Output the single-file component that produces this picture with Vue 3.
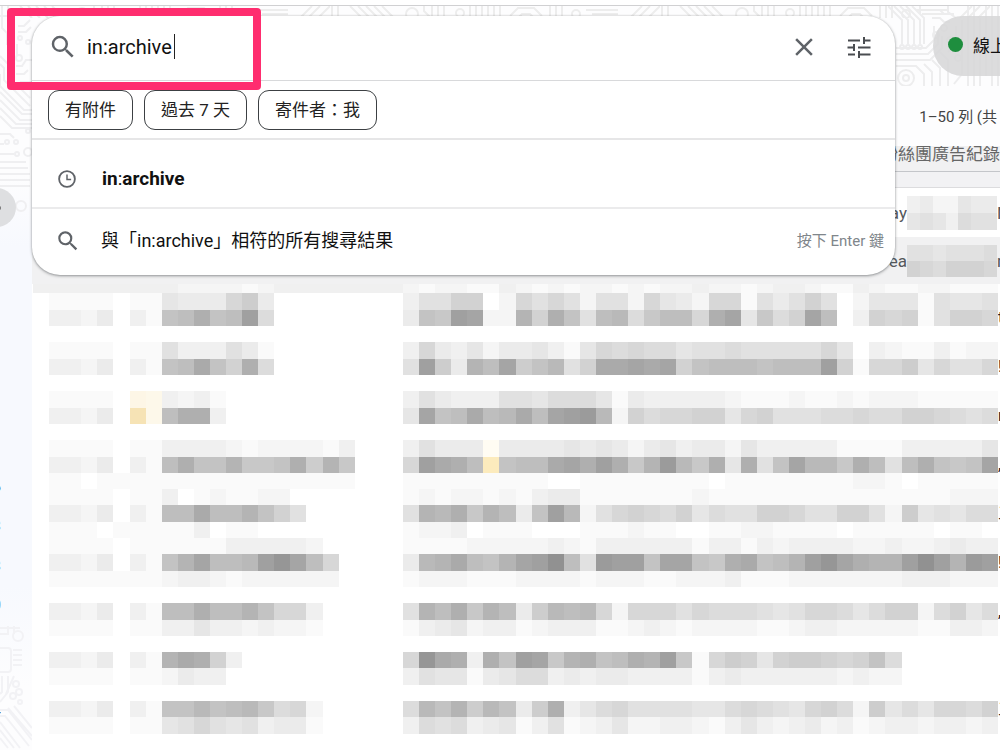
<script setup>
import { ref } from 'vue'

const query = ref('in:archive')
const chips = ['有附件', '過去 7 天', '寄件者：我']
const counts = [
  { top: 477, text: '6' },
  { top: 516, text: '3' },
  { top: 556, text: '3' },
  { top: 595, text: '0' },
  { top: 703, text: '+' },
]
const tails = ['ti', '!', 'm', ',', '三', '!', ',', '', '三']

// Each letter is one gray level: a is white, every next letter is 5 darker.
// Digits are tinted cells.
const tints = { 1: '#fdf6e6', 2: '#f6e3b5', 3: '#fdf8ea', 4: '#fffcf3', 5: '#fcebbd', 6: '#c0bdb6' }
const light = 'abbbbabb'
const dark = 'addceadb'
const rows = [
  ['dddddddd', 'dccccbcddddddddd', 'cbccbbdcbcbccbcbc' + 'cdccbcddcbbdcbbccbbb'],
  [light, 'feeeike', 'dggjjacigigcggcif' + 'eciibgegjgacfffbgffg'],
  [dark, 'mnqmnth', 'emltsccpjqmgnohln' + 'niqsflhjsnadjijbgjji'],
  ['', '', ''],
  [light, 'gdddgeb', 'diedfceefdbfihihh' + 'fgghgggggifadcbbdbcc'],
  [dark, 'mnrmjqh', 'gtkepnskmogjrrsrs' + 'jmnnnmnnntjbiikfiggi'],
  ['', '', ''],
  ['abbbba13', 'dcdb', 'dgedddggfhhhfbedd' + 'dddcbbbcbbcbcccbbbbb'],
  ['addcea23', 'nqqd', 'fsmnrnornstuocjhi' + 'ijjfijggghhihhjjihgh'],
  ['', '', ''],
  [light, 'ddddcbccccbd', 'dgeee4eeeefefecef' + 'deecfdddddbbbbdddddf'],
  [dark, 'nqmmpllmqkpl', 'itrqn5mnnrsqtqlpu' + 'olqfqgmsoolqngnqmlms'],
  ['abbabbbb', 'bbbbbbbbbbbb', 'bbbbbbbbbaabbbbbb' + 'bbabbbbbbbbccbabbbbb'],
  [light, 'dabcbbcc', 'bcbccbcbdeebbbbbb' + 'bcbbbbbbbbbbbbbbbccc'],
  [dark, 'nnrnnpmjg', 'gpoqlpnemtocgijih' + 'jfhggjjiggjjgckfgfhh'],
  ['abbbabbb', 'bbdabb', 'bccdabbbaaabbbcbb' + 'aabbccbbbbabbbbbabba'],
  [light, 'bbbbdddddc', 'bbbbcccccdcbddddd' + 'dbddbdcddddccdccdedd'],
  [dark, 'mpsnnotvsni', 'eoprnmpstwnguttms' + 'smlqrmnptvsqpptwtput'],
  ['abbbbbbb', 'cddcbcccccc', 'bcccbbbccccbcccbb' + 'cccdbbbcccccccdddccc'],
  ['', '', ''],
  [dark, 'nnqnnpmiid', 'gpnqlpnekonoiciii' + 'gihhhgfgiihfhjjchjfh'],
  [light, 'ddfddcdccb', 'bdefcddbcdddbbcdc' + 'bccccbbcddcccccbbddc'],
  ['', '', ''],
  [dark, 'prqjd', 'ivrqdqmtslpqmnqpt' + 'lbikjfjkkjijmhaaaaaa'],
  [light, 'cedd', 'dgffbefhhdedeeddd' + 'dbdeddddddcdccaaaaaa'],
  ['', '', ''],
  [dark, 'mmomnolhic', 'hompkomekqdfhiggg' + 'gffhihgfijhckfhfiihj'],
  [light, 'fgigfgdeeb', 'dhghdefbdgbcdfccd' + 'dcbdfdcdecdbcddcddcd'],
  ['', '', ''],
]

function cellsOf(parts, widths) {
  const line = parts.map((p, i) => p.slice(0, widths[i]).padEnd(widths[i], 'a')).join('')
  return [...line]
    .map((ch, x) => ({
      x,
      fill: tints[ch] || `rgb(${Array(3).fill(255 - (ch.charCodeAt(0) - 97) * 5)})`,
      ch,
    }))
    .filter((c) => c.ch !== 'a')
}
const mosaic = rows.map((r) => cellsOf(r, [8, 15, 37]))
const smallTop = ['deccfee', 'fgfdhgg'].map((r) => cellsOf([r], [7]))
const smallBottom = ['ggfgggh', 'jihjjji'].map((r) => cellsOf([r], [7]))
</script>

<template>
  <div class="app">
    <div class="topline"></div>
    <svg class="traces traces-top" aria-hidden="true">
      <defs>
        <pattern id="strip" width="330" height="12" patternUnits="userSpaceOnUse">
          <g fill="none" stroke="#ededed" stroke-width="2">
            <path d="M2 0v12M8 0v12M20 0l12 12M28 0l12 12M36 0l12 12M44 0l12 12M52 0l12 12" />
            <circle cx="82" cy="8" r="6" /><path d="M94 0v5l6 6M102 0v12M108 0v12M114 0v12" />
            <circle cx="130" cy="7" r="4" /><path d="M140 0v12M146 0v12M152 0v12M158 0v12M164 0v12M170 0v12" />
            <path d="M180 10l8-8h16l8 8M188 12l4-4h8l4 4M220 0v12M226 0v12M232 0v12" />
            <circle cx="246" cy="8" r="4" /><path d="M256 4h32M262 8h26M300 12l12-12M308 12l12-12M318 12l12-12" />
          </g>
        </pattern>
      </defs>
      <rect width="100%" height="12" fill="url(#strip)" />
    </svg>
    <svg class="traces traces-left" width="32" height="220" viewBox="0 0 32 220" aria-hidden="true">
      <g fill="none" stroke="#efeff1" stroke-width="2">
        <path d="M2 2v20l5 5v12M0 10h8M0 50l8 8v12l22 22M0 58l4 4v12l26 26M0 68v12l24 24h8M0 86l22 22h10M0 94l20 20h12M0 102l16 16h16M0 110l12 12h20" />
        <path d="M18 20h6l6-6M18 26h8l5-5M16 60h6l4-6h6M16 68h8l4-4M20 76h12M0 128h10l4 4M0 138h4M0 148h14M0 156h26M0 162h28M0 168h30M0 174h30M0 180h30M17 38v12" />
        <circle cx="20" cy="32" r="2" /><circle cx="28" cy="36" r="2" /><circle cx="19" cy="52" r="3" />
        <circle cx="7" cy="136" r="2" /><circle cx="16" cy="136" r="2" /><circle cx="17" cy="148" r="2" />
        <circle cx="28" cy="146" r="4" /><circle cx="28" cy="125" r="2" /><circle cx="21" cy="200" r="5" />
      </g>
    </svg>
    <svg class="traces traces-bottom" width="32" height="124" viewBox="0 0 32 124" aria-hidden="true">
      <g fill="none" stroke="#f2f2f5" stroke-width="2">
        <path d="M0 2h20M0 8h8v-8M14 8v-8M0 22h8q3 0 3 3v18q0 3-3 3H0M13 24h9M13 29h9M13 34h9M13 39h9M2 50v16l-2 2M8 50v16l-8 10M14 50l-8 18" />
        <path d="M0 84h8l24 30M0 90h5l24 30M0 96l20 26M0 104l14 18M0 112l8 10M8 82l24 28M14 80l18 22" />
        <circle cx="18" cy="10" r="5" /><circle cx="16" cy="58" r="3" /><circle cx="13" cy="70" r="3" /><circle cx="19" cy="66" r="3" /><circle cx="20" cy="76" r="2" />
      </g>
    </svg>

    <header class="bar">
      <svg class="traces traces-right" width="112" height="80" viewBox="0 0 112 80" aria-hidden="true">
        <g fill="none" stroke="#ededee" stroke-width="2">
          <path d="M0 0l14 14v24M6 0l14 14v24M12 0l14 14v24M18 0l14 14v24M24 0l12 12v26M32 0v8M8 42h30l8-8V20M8 48h32l10-10V24M8 54h34l12-12V30M8 60h20l8 8v12M36 58l8 8v14M44 54l8 8v18M52 46l8 8v26" />
          <path d="M44 4h8l4 4h10M44 12h8l4 4h6M60 0v6l8 6M68 20v12M68 38l-8 8M74 14v54l-8 10M80 0v80M86 0v80M92 12v68M98 0v70M104 6v74M110 0v80" />
          <circle cx="18" cy="72" r="8" /><circle cx="18" cy="72" r="3" />
          <circle cx="14" cy="41" r="2" /><circle cx="20" cy="41" r="2" /><circle cx="26" cy="41" r="2" /><circle cx="32" cy="41" r="2" />
          <circle cx="56" cy="22" r="3" /><circle cx="48" cy="29" r="3" /><circle cx="62" cy="34" r="3" /><circle cx="70" cy="52" r="3" />
        </g>
      </svg>
      <button class="status" type="button"><span class="dot"></span><span>線上</span></button>
    </header>

    <div class="body">
      <aside class="side">
        <span class="side-pill"><i></i></span>
        <span v-for="c in counts" :key="c.top" class="count" :style="{ top: c.top + 'px' }">{{ c.text }}</span>
      </aside>
      <main class="main">
        <div class="pager">1–50 列 (共</div>
        <div class="banner"><span>粉絲團廣告紀錄</span></div>
        <div class="gap"></div>
        <div class="mail">
          <span>ay</span>
          <svg width="90" height="34" viewBox="0 0 7 2" preserveAspectRatio="none" shape-rendering="crispEdges" aria-hidden="true">
            <g v-for="(r, y) in smallTop" :key="y">
              <rect v-for="c in r" :key="c.x" :x="c.x" :y="y" width="1" height="1" :fill="c.fill" />
            </g>
          </svg>
          <span class="cut">N</span>
        </div>
        <div class="mail read">
          <span>rea</span>
          <svg width="90" height="32" viewBox="0 0 7 2" preserveAspectRatio="none" shape-rendering="crispEdges" aria-hidden="true">
            <g v-for="(r, y) in smallBottom" :key="y">
              <rect v-for="c in r" :key="c.x" :x="c.x" :y="y" width="1" height="1" :fill="c.fill" />
            </g>
          </svg>
          <span class="cut">n</span>
        </div>
        <div class="list">
          <svg class="mosaic" viewBox="0 0.42 60 28.58" preserveAspectRatio="none" shape-rendering="crispEdges" aria-hidden="true">
            <g v-for="(r, y) in mosaic" :key="y">
              <rect v-for="c in r" :key="c.x" :x="c.x" :y="y" width="1" height="1" :fill="c.fill" />
            </g>
          </svg>
          <div class="tails"><span v-for="(t, i) in tails" :key="i">{{ t }}</span></div>
        </div>
      </main>
    </div>

    <form class="search" role="search" @submit.prevent>
      <div class="field">
        <button type="submit" class="icon find" aria-label="搜尋">
          <svg width="30" height="30" viewBox="0 0 24 24" fill="#5f6368"><path d="M15.5 14h-.79l-.28-.27A6.47 6.47 0 0 0 16 9.5 6.5 6.5 0 1 0 9.5 16c1.61 0 3.09-.59 4.23-1.57l.27.28v.79l5 4.99L20.49 19l-4.99-5zm-6 0C7.01 14 5 11.99 5 9.5S7.01 5 9.5 5 14 7.01 14 9.5 11.99 14 9.5 14z" /></svg>
        </button>
        <input v-model="query" type="text" aria-label="搜尋郵件" spellcheck="false" />
        <span class="caret"></span>
        <button type="button" class="icon clear" aria-label="清除搜尋">
          <svg width="30" height="30" viewBox="0 0 24 24" fill="#5f6368"><path d="M19 6.41L17.59 5 12 10.59 6.41 5 5 6.41 10.59 12 5 17.59 6.41 19 12 13.41 17.59 19 19 17.59 13.41 12z" /></svg>
        </button>
        <button type="button" class="icon" aria-label="顯示搜尋選項">
          <svg width="24" height="24" viewBox="0 0 24 24" fill="none" stroke="#4a4d51" stroke-width="2"><path d="M1 5.5h12M17 2v7M17 5.5h6.5M.5 12.5h7M7 9v7M11 12.5h12.5M1 19.5h7M12 16v7M12 19.5h11.5" /></svg>
        </button>
      </div>
      <div class="chips">
        <button v-for="c in chips" :key="c" type="button" class="chip">{{ c }}</button>
      </div>
      <a class="hit recent" href="#">
        <svg width="22" height="22" viewBox="0 0 24 24" fill="none" stroke="#5f6368" stroke-width="2"><circle cx="12" cy="12" r="8.6" /><path d="M12 7v5.5h4.5" stroke-width="1.6" /></svg>
        <span><b>in</b>:<b>archive</b></span>
      </a>
      <a class="hit all" href="#">
        <svg width="26" height="26" viewBox="0 0 24 24" fill="#5f6368"><path d="M15.5 14h-.79l-.28-.27A6.47 6.47 0 0 0 16 9.5 6.5 6.5 0 1 0 9.5 16c1.61 0 3.09-.59 4.23-1.57l.27.28v.79l5 4.99L20.49 19l-4.99-5zm-6 0C7.01 14 5 11.99 5 9.5S7.01 5 9.5 5 14 7.01 14 9.5 11.99 14 9.5 14z" /></svg>
        <span>與「in:archive」相符的所有搜尋結果</span>
        <small>按下 Enter 鍵</small>
      </a>
    </form>
    <div class="mark"></div>
  </div>
</template>

<style>
body { overflow: hidden; }
</style>

<style scoped>
* { box-sizing: border-box; }
.app {
  position: relative;
  display: flex;
  flex-direction: column;
  min-height: 100vh;
  overflow: hidden;
  background: #fdfdfe;
  color: #202124;
  font-family: Roboto, "Noto Sans CJK TC", sans-serif;
}
button, input { font: inherit; color: inherit; }
.topline { height: 6px; background: #fff; border-bottom: 1px solid #d0d0d2; }
.traces { position: absolute; pointer-events: none; }
.traces-top { top: 6px; left: 0; width: 100%; height: 12px; }
.traces-left { top: 6px; left: 0; }
.traces-bottom { bottom: 0; left: 0; z-index: 1; }
.traces-right { top: 0; right: 0; }
.bar { position: relative; display: flex; justify-content: flex-end; height: 80px; padding-top: 10px; }
.status {
  position: relative;
  display: flex;
  align-items: center;
  gap: 10px;
  width: 130px;
  height: 60px;
  margin-right: -63px;
  padding: 0 0 4px 15px;
  border: 0;
  border-radius: 30px;
  background: rgba(215, 215, 216, 0.88);
  font-size: 17px;
  color: #111;
}
.dot { width: 15px; height: 15px; border-radius: 50%; background: #1e8e3e; }
.body { display: flex; flex: 1; }
.side { width: 32px; background: linear-gradient(transparent 90px, #f7f9fe 160px, #f7f9fe 500px, #fdfdfe 600px); }
.side-pill {
  position: absolute;
  top: 188px;
  left: -60px;
  width: 76px;
  height: 39px;
  border-radius: 20px;
  background: #dedfe1;
}
.side-pill i { position: absolute; top: 18px; right: 15px; width: 3px; height: 4px; border-radius: 50%; background: #777; }
.count {
  position: absolute;
  left: 0;
  display: flex;
  justify-content: flex-end;
  width: 1px;
  overflow: hidden;
  font-size: 15px;
  line-height: 20px;
}
.main { display: flex; flex: 1; flex-direction: column; min-width: 0; }
.pager { height: 60px; padding-right: 3px; font-size: 15px; line-height: 62px; text-align: right; color: #444; }
.banner {
  display: flex;
  justify-content: flex-end;
  height: 26px;
  overflow: hidden;
  border-bottom: 1px solid #c4c6ca;
  background: #f1f1f2;
  font-size: 17px;
  line-height: 16px;
  color: #666;
}
.gap { height: 16px; border-bottom: 1px solid #dcdcde; background: #f2f2f4; }
.mail {
  display: flex;
  align-items: center;
  justify-content: flex-end;
  height: 49px;
  background: #fff;
  font-size: 17px;
  color: #55585c;
}
.mail.read { height: 47px; background: #f1f1f2; }
.cut { width: 3px; overflow: hidden; }
.list { display: flex; flex: 1; padding-left: 1px; background: #fff; }
.mosaic { flex: 1; min-width: 0; height: 100%; min-height: 466px; }
.tails { display: flex; flex-direction: column; width: 2px; padding-top: 9px; overflow: hidden; font-size: 16px; line-height: 49px; white-space: nowrap; }
.tails span { height: 49px; }
.search {
  position: absolute;
  top: 16px;
  right: 105px;
  left: 32px;
  border-radius: 28px;
  background: #fff;
  box-shadow: 0 1px 3px rgba(60, 64, 67, 0.5), 0 0 2px rgba(60, 64, 67, 0.2);
}
.field { display: flex; align-items: center; height: 65px; padding: 0 24px 3px 16px; border-bottom: 1px solid #d8d9db; }
.icon { display: flex; padding: 0; border: 0; background: none; }
.find { margin-right: 9px; }
.clear { margin: 0 28px 0 auto; }
input {
  width: 87px;
  padding: 0;
  border: 0;
  outline: 0;
  background: none;
  font-size: 20px;
  line-height: 26px;
  color: #111;
}
.caret { width: 1px; height: 25px; background: #222; }
.chips { display: flex; gap: 11px; height: 59px; padding: 9px 16px 0; border-bottom: 2px solid #e6e6e7; }
.chip {
  height: 40px;
  padding: 0 16px 4px;
  border: 1px solid #3c4043;
  border-radius: 11px;
  background: #fff;
  font-size: 17px;
  color: #222;
}
.hit { display: flex; align-items: center; color: #111; font-size: 18px; text-decoration: none; }
.recent { height: 69px; padding: 10px 24px 0; border-bottom: 2px solid #ebebec; font-size: 19px; }
.recent span { margin-left: 24px; }
.all { height: 66px; padding: 0 11px 6px 23px; }
.all svg { margin-top: 3px; }
.all span { margin-left: 20px; }
.all small { margin-left: auto; font-size: 15px; color: #80868b; }
.mark {
  position: absolute;
  top: 8px;
  left: 7px;
  width: 254px;
  height: 82px;
  border: 8px solid #ff2d6f;
  border-radius: 4px;
}
</style>
